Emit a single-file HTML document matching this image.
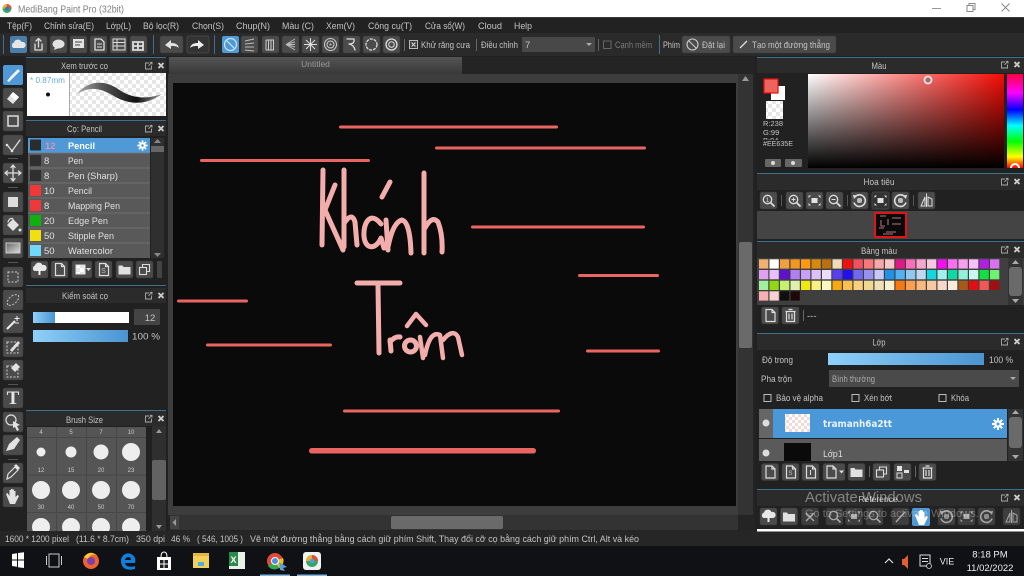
<!DOCTYPE html>
<html lang="vi"><head><meta charset="utf-8"><title>MediBang Paint Pro</title>
<style>
html,body{margin:0;padding:0;background:#222;overflow:hidden}
svg{display:block}
#root{filter:blur(.3px)}
text{font-family:"Liberation Sans",Arial,sans-serif;font-size:9.5px;fill:#c4c4c4}
.b{fill:#4b4b4b;stroke:#3a3a3a;stroke-width:.5}
.i{fill:none;stroke:#ddd;stroke-width:1.3;stroke-linecap:round;stroke-linejoin:round}
.f{fill:#e2e2e2}
.h{fill:#2b2b2b}
.c{text-anchor:middle}
.l{fill:#3f6f8f}
.r{fill:#ea6561}
.p{fill:none;stroke:#f3aeac;stroke-linecap:round;stroke-linejoin:round;stroke-width:5}
.n{font-size:6px;text-anchor:middle;fill:#ccc}
.d{fill:#eee}
.s rect{width:9.3px;height:9.3px}
</style></head><body>
<svg id="root" width="1024" height="576" viewBox="0 0 1024 576" xmlns="http://www.w3.org/2000/svg">
<defs>
<pattern id="ck" width="8" height="8" patternUnits="userSpaceOnUse"><rect width="8" height="8" fill="#fff"/><rect width="4" height="4" fill="#e6e6e6"/><rect x="4" y="4" width="4" height="4" fill="#e6e6e6"/></pattern>
<pattern id="ck2" width="6" height="6" patternUnits="userSpaceOnUse"><rect width="6" height="6" fill="#fff"/><rect width="3" height="3" fill="#f3d9d8"/><rect x="3" y="3" width="3" height="3" fill="#f3d9d8"/></pattern>
<linearGradient id="sat"><stop offset="0" stop-color="#fff"/><stop offset="1" stop-color="#f40c04"/></linearGradient>
<linearGradient id="blk" x2="0" y2="1"><stop offset="0" stop-color="#000" stop-opacity="0"/><stop offset="1" stop-color="#000"/></linearGradient>
<linearGradient id="hue" x2="0" y2="1"><stop offset="0" stop-color="#ff0040"/><stop offset=".2" stop-color="#f0f"/><stop offset=".38" stop-color="#00f"/><stop offset=".55" stop-color="#0ff"/><stop offset=".72" stop-color="#0f0"/><stop offset=".88" stop-color="#ff0"/><stop offset="1" stop-color="#f00"/></linearGradient>
<linearGradient id="bar"><stop offset="0" stop-color="#8fd0fb"/><stop offset="1" stop-color="#4a94d0"/></linearGradient>
<linearGradient id="tab" x2="0" y2="1"><stop offset="0" stop-color="#555"/><stop offset="1" stop-color="#383838"/></linearGradient>
<linearGradient id="grad" x1="0" y1="0" x2="1" y2="1"><stop offset="0" stop-color="#666"/><stop offset="1" stop-color="#ddd"/></linearGradient>
<linearGradient id="stk"><stop offset="0" stop-color="#aaa"/><stop offset=".3" stop-color="#555"/><stop offset=".7" stop-color="#111"/><stop offset="1" stop-color="#999"/></linearGradient>
<g id="pc"><path d="M4 1H0.5V7H6.5V3.5M3.5 3.8L7 .3M4.8 .3H7V2.5" fill="none" stroke="#aaa" stroke-width=".9"/><path d="M13.5 1L18.5 6M18.5 1L13.5 6" fill="none" stroke="#ccc" stroke-width="1.9"/></g>
<g id="gear"><circle r="3.7" fill="#fff"/><path d="M0-6V6M-6 0H6M-4.2-4.2L4.2 4.2M-4.2 4.2L4.2-4.2" stroke="#fff" stroke-width="2"/><circle r="1.5" fill="#4a98d8"/></g>
<path id="page" d="M-4-6H2L5-3V6H-4ZM2-6V-3H5" fill="none" stroke="#ddd" stroke-width="1.2"/>
<path id="folder" d="M-6-4H-2L-1-2.5H6V5H-6Z" fill="#e0e0e0"/>
<path id="trash" d="M-5-4H5M-2-6H2M-4-4V6H4V-4M-1.5-2V4M1.5-2V4" fill="none" stroke="#ddd" stroke-width="1.2"/>
<path id="cloud" d="M-5 3A3 3 0 0 1-4.5-2.5A4 4 0 0 1 3-3A3 3 0 0 1 5 3Z" fill="#e6e6e6"/>
<g id="dup"><rect x="-5" y="-2" width="7" height="7" fill="none" stroke="#ddd" stroke-width="1.1"/><path d="M-2-2V-5H5V2H2" fill="none" stroke="#ddd" stroke-width="1.1"/></g>
<g id="zoomi"><circle cx="-1" cy="-1" r="4.200" fill="none" stroke="#ddd" stroke-width="1.300"/><path d="M2 2L6 6" stroke="#ddd" stroke-width="1.800"/></g>
<g id="rot"><path d="M-4.500-3.500A5.800 5.800 0 1 1-5.500 2" fill="none" stroke="#ddd" stroke-width="1.600"/><path d="M-6.500-5.500L-2.500-5L-5.500-1.500Z" class="f"/><rect x="-2.500" y="-2.500" width="5" height="5" rx="2" class="f" opacity=".75"/></g>
<g id="fit"><rect x="-3" y="-2.500" width="6" height="5" class="f"/><path d="M-6-5H-3.500L-6-2.500ZM6-5H3.500L6-2.500ZM-6 5H-3.500L-6 2.500ZM6 5H3.500L6 2.500Z" class="f"/></g>
<rect id="btn" x="0" y="0" width="17" height="17" rx="2" class="b"/>
</defs>

<!-- base -->
<rect width="1024" height="576" fill="#212121"/>
<!-- title bar -->
<rect width="1024" height="17" fill="#fff"/>
<rect y="17" width="1024" height="1" fill="#3a3a3a"/>
<circle cx="7" cy="8.500" r="4.500" fill="#3aa36a"/><path d="M7 4A4.500 4.500 0 0 1 11.500 8.500H7Z" fill="#e05040"/><path d="M2.500 8.500A4.500 4.500 0 0 1 7 4V8.500Z" fill="#e8b030"/><circle cx="7" cy="8.500" r="1.800" fill="#3070c0"/>
<text x="18" y="12.500" textLength="106" lengthAdjust="spacingAndGlyphs" style="font-size:10.500px;fill:#808080">MediBang Paint Pro (32bit)</text>
<path d="M932 8.500H941" stroke="#999"/>
<path d="M967 5.500H973V11.500H967ZM969 5.500V3.500H975V9.500H973" fill="none" stroke="#888"/>
<path d="M1001.500 3.500L1009.500 11.500M1009.500 3.500L1001.500 11.500" stroke="#888"/>

<!-- menu -->
<rect y="18" width="1024" height="15" fill="#222"/>
<g>
<text x="7" y="29" textLength="25" lengthAdjust="spacingAndGlyphs">Tệp(F)</text>
<text x="44" y="29" textLength="50" lengthAdjust="spacingAndGlyphs">Chỉnh sửa(E)</text>
<text x="106" y="29" textLength="25" lengthAdjust="spacingAndGlyphs">Lớp(L)</text>
<text x="143" y="29" textLength="36" lengthAdjust="spacingAndGlyphs">Bộ lọc(R)</text>
<text x="192" y="29" textLength="32" lengthAdjust="spacingAndGlyphs">Chọn(S)</text>
<text x="236" y="29" textLength="34" lengthAdjust="spacingAndGlyphs">Chụp(N)</text>
<text x="282" y="29" textLength="32" lengthAdjust="spacingAndGlyphs">Màu (C)</text>
<text x="326" y="29" textLength="29" lengthAdjust="spacingAndGlyphs">Xem(V)</text>
<text x="368" y="29" textLength="44" lengthAdjust="spacingAndGlyphs">Công cụ(T)</text>
<text x="425" y="29" textLength="40" lengthAdjust="spacingAndGlyphs">Cửa sổ(W)</text>
<text x="478" y="29" textLength="24" lengthAdjust="spacingAndGlyphs">Cloud</text>
<text x="514" y="29" textLength="18" lengthAdjust="spacingAndGlyphs">Help</text>
</g>

<!-- toolbar -->
<rect y="33" width="1024" height="23" fill="#2a2a2a"/>
<rect x="3" y="35" width="1" height="19" class="l"/><rect x="153" y="35" width="1" height="19" class="l"/><rect x="214" y="35" width="1" height="19" class="l"/>
<rect x="10" y="36" width="17" height="17" rx="2" fill="#4a7ea8"/><use href="#cloud" transform="translate(18.500 45)"/>
<use href="#btn" transform="translate(30 36)"/><path d="M35 44V50H42V44M38.500 47V39M36 41L38.500 38.500L41 41" class="i"/>
<use href="#btn" transform="translate(50 36)"/><ellipse cx="58.500" cy="44" rx="6" ry="4.500" class="f"/><path d="M55 47L54 50L59 48Z" class="f"/>
<use href="#btn" transform="translate(70 36)"/><rect x="73" y="39" width="11" height="9" class="f"/><path d="M75 42H82M75 45H80" stroke="#444"/>
<use href="#btn" transform="translate(90 36)"/><path d="M95 39H101L104 42V50H95Z" class="i"/><path d="M97 44H102M97 47H102" stroke="#ddd"/>
<use href="#btn" transform="translate(110 36)"/><rect x="113" y="39" width="12" height="11" fill="none" stroke="#ddd"/><path d="M113 42.500H125M113 46H125M117 39V50" stroke="#ddd"/>
<use href="#btn" transform="translate(130 36)"/><path d="M133 42H143V50H133ZM138 42V50M133 46H143" fill="none" stroke="#ddd" stroke-width="1.800"/>
<rect x="160" y="36" width="23" height="17" rx="2" class="b"/><path d="M165 45L171 40V43C175 43 178 44 179 48C177 46 174 46 171 46V49Z" class="f"/>
<rect x="187" y="36" width="22" height="17" rx="2" fill="#333" stroke="#444"/><path d="M204 45L198 40V43C194 43 191 44 190 48C192 46 195 46 198 46V49Z" fill="#eee"/>
<rect x="222" y="36" width="17" height="17" rx="2" fill="#4f9ad6"/><circle cx="230.500" cy="44.500" r="6" fill="none" stroke="#cfe6fa" stroke-width="1.200"/><path d="M226.500 40.500L234.500 48.500" stroke="#cfe6fa" stroke-width="1.200"/>
<use href="#btn" transform="translate(241 36)"/><path d="M245 41L254 39M245 44L254 43M245 47L254 47M245 50L254 51" stroke="#bbb"/>
<use href="#btn" transform="translate(262 36)"/><path d="M266 40V50M268.500 40V50M271 40V50M273.500 40V50M266 40H274M266 50H274" stroke="#ccc"/>
<use href="#btn" transform="translate(282 36)"/><path d="M286 44.500L295 39M286 44.500L295 42M286 44.500H295M286 44.500L295 47M286 44.500L295 50" stroke="#bbb"/>
<use href="#btn" transform="translate(302 36)"/><path d="M310.500 38V51M304 44.500H317M306 40L315 49M315 40L306 49" stroke="#ddd"/>
<use href="#btn" transform="translate(322 36)"/><circle cx="330.500" cy="44.500" r="6" fill="none" stroke="#ccc"/><circle cx="330.500" cy="44.500" r="3.500" fill="none" stroke="#ccc"/><circle cx="330.500" cy="44.500" r="1" fill="#ccc"/>
<use href="#btn" transform="translate(343 36)"/><path d="M347 39H354Q355 44 349 44Q354 45 355 50" class="i"/>
<use href="#btn" transform="translate(363 36)"/><circle cx="371.500" cy="44.500" r="5.500" fill="none" stroke="#ddd" stroke-width="1.300" stroke-dasharray="3 1"/>
<use href="#btn" transform="translate(383 36)"/><circle cx="391.500" cy="44.500" r="5.500" fill="none" stroke="#ddd" stroke-width="1.300"/><circle cx="391.500" cy="44.500" r="2.800" fill="none" stroke="#ddd"/>
<rect x="404" y="39" width="1" height="12" fill="#666"/>
<rect x="409.500" y="40.500" width="8" height="8" fill="#3a3a3a" stroke="#bbb"/><path d="M411.500 42.500L415.500 46.500M415.500 42.500L411.500 46.500" stroke="#ddd"/>
<text x="421" y="48" textLength="49" lengthAdjust="spacingAndGlyphs">Khử răng cưa</text>
<rect x="476" y="39" width="1" height="12" fill="#666"/>
<text x="481" y="48" textLength="37" lengthAdjust="spacingAndGlyphs">Điều chỉnh</text>
<rect x="522" y="37" width="73" height="15" fill="#484848"/><text x="525" y="48">7</text><path d="M586 43H592L589 46Z" fill="#aaa"/>
<rect x="598" y="39" width="1" height="12" fill="#666"/>
<rect x="603.500" y="41" width="7.500" height="7.500" fill="none" stroke="#666"/>
<text x="615" y="48" textLength="37" lengthAdjust="spacingAndGlyphs" style="fill:#7a7a7a">Cạnh mềm</text>
<rect x="659" y="35" width="1" height="19" class="l"/>
<text x="663" y="48" textLength="17" lengthAdjust="spacingAndGlyphs">Phím</text>
<rect x="682" y="36" width="48" height="17" rx="2" class="b"/><circle cx="692.500" cy="44.500" r="5.500" fill="none" stroke="#ccc" stroke-width="1.100"/><path d="M688.500 40.500L696.500 48.500" stroke="#ccc"/>
<text x="702" y="48" textLength="23" lengthAdjust="spacingAndGlyphs">Đặt lại</text>
<rect x="733" y="36" width="103" height="17" rx="2" class="b"/><path d="M740 48L747 41" stroke="#ddd" stroke-width="1.300"/>
<text x="752" y="48" textLength="78" lengthAdjust="spacingAndGlyphs">Tạo một đường thẳng</text>

<!-- left tools -->
<rect x="3" y="65" width="20" height="20" rx="2" fill="#4f9ad6"/><path d="M7 81L11 76L18 69L20 71L13 78L9 82Z" fill="#f3f3f3"/>
<rect x="3" y="88" width="20" height="20" rx="2" class="b"/><path d="M13 92L19 97L13 104L7 99Z" class="f"/><path d="M13 92L19 97L16 100.500L10 95.500Z" fill="#fff"/>
<rect x="3" y="111" width="20" height="20" rx="2" class="b"/><rect x="8" y="116" width="10" height="10" fill="none" stroke="#ddd" stroke-width="1.500"/>
<rect x="3" y="135" width="20" height="20" rx="2" class="b"/><path d="M8 146L12 151L20 140" class="i" stroke-width="1.800"/><circle cx="7" cy="145" r="1.300" class="f"/><circle cx="12" cy="151" r="1.300" class="f"/>
<rect x="8" y="158" width="10" height="1" fill="#555"/>
<rect x="3" y="163" width="20" height="20" rx="2" class="b"/><path d="M13 165V181M5 173H21M11 167.500L13 165L15 167.500M11 178.500L13 181L15 178.500M7.500 171L5 173L7.500 175M18.500 171L21 173L18.500 175" class="i"/>
<rect x="8" y="187" width="10" height="1" fill="#555"/>
<rect x="3" y="192" width="20" height="20" rx="2" class="b"/><rect x="8" y="197" width="10" height="10" fill="#ddd"/>
<rect x="3" y="215" width="20" height="20" rx="2" class="b"/><path d="M7 225L13 219L19 225L13 231Z" class="f"/><path d="M8 222Q10 217 13 219" class="i"/><circle cx="20" cy="230" r="1.500" class="f"/>
<rect x="3" y="238" width="20" height="20" rx="2" class="b"/><rect x="6" y="243" width="14" height="10" fill="url(#grad)" stroke="#ccc"/>
<rect x="8" y="262" width="10" height="1" fill="#555"/>
<rect x="3" y="267" width="20" height="20" rx="2" class="b"/><rect x="8" y="272" width="10" height="10" fill="none" stroke="#ccc" stroke-dasharray="2 1.500"/>
<rect x="3" y="290" width="20" height="20" rx="2" class="b"/><path d="M8 305C5 301 12 293 18 295C21 298 14 307 8 305Z" fill="none" stroke="#ccc" stroke-dasharray="2 1.500"/>
<rect x="3" y="313" width="20" height="20" rx="2" class="b"/><path d="M7 329L15 321" stroke="#eee" stroke-width="2"/><path d="M17 316V321M14.500 318.500H19.500M15 323H19" stroke="#eee"/>
<rect x="3" y="337" width="20" height="20" rx="2" class="b"/><rect x="7" y="342" width="11" height="11" fill="none" stroke="#ccc" stroke-dasharray="2 1.500"/><path d="M10 350L18 341L20 343L12 352Z" class="f"/>
<rect x="3" y="360" width="20" height="20" rx="2" class="b"/><rect x="7" y="366" width="11" height="11" fill="none" stroke="#ccc" stroke-dasharray="2 1.500"/><path d="M11 368L16 363L20 367L15 372Z" class="f"/>
<rect x="8" y="384" width="10" height="1" fill="#555"/>
<rect x="3" y="388" width="20" height="20" rx="2" class="b"/><text x="13" y="404" class="c" style="font-family:'Liberation Serif',serif;font-size:19px;font-weight:bold;fill:#e6e6e6">T</text>
<rect x="3" y="412" width="20" height="20" rx="2" class="b"/><circle cx="11" cy="420" r="5" fill="none" stroke="#ddd" stroke-width="1.200"/><path d="M13 421L20 425L17 426L19 430L17 431L15 427L13 428Z" class="f"/>
<rect x="3" y="435" width="20" height="20" rx="2" class="b"/><path d="M6 451L9 444L17 437L20 440L14 449Z" class="f"/>
<rect x="8" y="459" width="10" height="1" fill="#555"/>
<rect x="3" y="463" width="20" height="20" rx="2" class="b"/><path d="M7 479L8 474L15 467L18 470L11 477Z" fill="none" stroke="#ddd" stroke-width="1.200"/><path d="M14 466L16 464L20 468L18 470Z" class="f"/>
<rect x="3" y="487" width="20" height="20" rx="2" class="b"/><path d="M8 499L6 494L7.500 493L9.500 496V490H11V495V489H12.500V495V489.500H14V495V491H15.500V497L17.500 495L19 496L15 504H10Z" class="f"/>

<!-- brush preview panel -->
<rect x="26" y="57" width="140" height="1" class="l"/>
<rect x="26" y="58" width="140" height="15" class="h"/>
<text x="84.500" y="69" class="c" textLength="47" lengthAdjust="spacingAndGlyphs">Xem trước cọ</text>
<use href="#pc" x="145" y="62"/>
<rect x="27" y="73" width="139" height="43" fill="#fff"/>
<rect x="70" y="73" width="96" height="43" fill="url(#ck)"/>
<rect x="69" y="73" width="1" height="43" fill="#aaa"/>
<text x="30" y="83" textLength="35" lengthAdjust="spacingAndGlyphs" style="font-size:8.500px;fill:#6ba7d8">* 0.87mm</text>
<circle cx="48" cy="94.500" r="2" fill="#111"/>
<path d="M77 94C88 80 105 80 118 89C128 96 142 101 162 94C145 106 128 105 112 95C100 88 90 86 77 94Z" fill="url(#stk)"/>

<!-- brush panel -->
<rect x="26" y="120" width="140" height="1" class="l"/>
<rect x="26" y="121" width="140" height="15" class="h"/>
<text x="84.500" y="132" class="c" textLength="35" lengthAdjust="spacingAndGlyphs">Cọ: Pencil</text>
<use href="#pc" x="145" y="125"/>
<rect x="28" y="138" width="122" height="120" fill="#595959"/>
<rect x="28" y="138" width="122" height="15" fill="#4f9ad6"/>
<path d="M28 153H150M28 168H150M28 183H150M28 198H150M28 213H150M28 228H150M28 243H150" stroke="#777" stroke-width=".7"/>
<rect x="30" y="139.500" width="11" height="11" fill="#2c2c2c"/>
<rect x="30" y="155" width="11" height="11" fill="#2f2f2f"/>
<rect x="30" y="170" width="11" height="11" fill="#2f2f2f"/>
<rect x="30" y="185" width="11" height="11" fill="#f03838"/>
<rect x="30" y="200" width="11" height="11" fill="#f03838"/>
<rect x="30" y="215" width="11" height="11" fill="#10b010"/>
<rect x="30" y="230" width="11" height="11" fill="#f0e010"/>
<rect x="30" y="245" width="11" height="11" fill="#70d8f8"/>
<text x="45" y="149" style="fill:#e090b0;font-weight:bold">12</text><text x="68" y="149" textLength="27" lengthAdjust="spacingAndGlyphs" style="fill:#fff;font-weight:bold">Pencil</text>
<use href="#gear" transform="translate(142.500 145.500) scale(.85)"/>
<text x="44" y="164" style="fill:#e0e0e0">8</text><text x="68" y="164" textLength="15" lengthAdjust="spacingAndGlyphs" style="fill:#e0e0e0">Pen</text>
<text x="44" y="179" style="fill:#e0e0e0">8</text><text x="68" y="179" textLength="50" lengthAdjust="spacingAndGlyphs" style="fill:#e0e0e0">Pen (Sharp)</text>
<text x="44" y="194" style="fill:#e0e0e0">10</text><text x="68" y="194" textLength="24" lengthAdjust="spacingAndGlyphs" style="fill:#e0e0e0">Pencil</text>
<text x="44" y="209" style="fill:#e0e0e0">8</text><text x="68" y="209" textLength="52" lengthAdjust="spacingAndGlyphs" style="fill:#e0e0e0">Mapping Pen</text>
<text x="44" y="224" style="fill:#e0e0e0">20</text><text x="68" y="224" textLength="40" lengthAdjust="spacingAndGlyphs" style="fill:#e0e0e0">Edge Pen</text>
<text x="44" y="239" style="fill:#e0e0e0">50</text><text x="68" y="239" textLength="46" lengthAdjust="spacingAndGlyphs" style="fill:#e0e0e0">Stipple Pen</text>
<text x="44" y="254" style="fill:#e0e0e0">50</text><text x="68" y="254" textLength="45" lengthAdjust="spacingAndGlyphs" style="fill:#e0e0e0">Watercolor</text>
<rect x="151" y="138" width="13" height="120" fill="#2f2f2f"/>
<rect x="151" y="146" width="13" height="6" fill="#666"/>
<path d="M154 143L157.500 139L161 143Z" fill="#888"/><path d="M154 253L157.500 257L161 253Z" fill="#888"/>
<use href="#btn" transform="translate(31 261)"/><use href="#cloud" transform="translate(39.500 268)"/><path d="M39.500 268V275" stroke="#eee" stroke-width="2"/>
<use href="#btn" transform="translate(51 261)"/><use href="#page" transform="translate(59.500 269.500)"/>
<rect x="72" y="261" width="20" height="17" rx="2" class="b"/><rect x="76" y="265" width="9" height="9" fill="url(#ck)" stroke="#ddd"/><path d="M86 268H91L88.500 271Z" fill="#ddd"/>
<use href="#btn" transform="translate(95 261)"/><use href="#page" transform="translate(103.500 269.500)"/><text x="103.500" y="273" class="c" style="font-size:7px">S</text>
<use href="#btn" transform="translate(116 261)"/><use href="#folder" transform="translate(124.500 269.500)"/>
<use href="#btn" transform="translate(136 261)"/><use href="#dup" transform="translate(144.500 269.500)"/>
<rect x="157" y="261" width="5" height="17" rx="1" fill="#444"/>

<!-- brush control -->
<rect x="26" y="285" width="140" height="1" class="l"/>
<rect x="26" y="288" width="140" height="15" class="h"/>
<text x="85" y="299" class="c" textLength="46" lengthAdjust="spacingAndGlyphs">Kiểm soát cọ</text>
<use href="#pc" x="145" y="292"/>
<rect x="33" y="312" width="96" height="11" fill="#fff"/>
<rect x="33" y="312" width="22" height="11" fill="url(#bar)"/>
<rect x="134" y="309" width="26" height="16" rx="1" fill="#444"/>
<text x="150" y="321" class="c">12</text>
<rect x="33" y="330" width="95" height="12" fill="url(#bar)"/>
<text x="132" y="339.500" textLength="28" lengthAdjust="spacingAndGlyphs">100 %</text>

<!-- brush size -->
<rect x="26" y="410" width="140" height="1" class="l"/>
<rect x="26" y="411" width="140" height="15" class="h"/>
<text x="84.500" y="423" class="c" textLength="37" lengthAdjust="spacingAndGlyphs">Brush Size</text>
<use href="#pc" x="145" y="415"/>
<svg x="27" y="427" width="120" height="104" viewBox="27 427 120 104">
<rect x="27" y="427" width="119" height="104" fill="#555"/>
<path d="M56.500 427V531M86.500 427V531M116.500 427V531M27 437.500H146M27 475H146M27 512.500H146" stroke="#474747"/>
<text x="41" y="434" class="n">4</text><text x="71" y="434" class="n">5</text><text x="101" y="434" class="n">7</text><text x="131" y="434" class="n">10</text>
<circle cx="41" cy="452" r="4.500" class="d"/><circle cx="71" cy="452" r="5.500" class="d"/><circle cx="101" cy="452" r="7.500" class="d"/><circle cx="131" cy="452" r="9" class="d"/>
<text x="41" y="472" class="n">12</text><text x="71" y="472" class="n">15</text><text x="101" y="472" class="n">20</text><text x="131" y="472" class="n">23</text>
<circle cx="41" cy="490" r="9" class="d"/><circle cx="71" cy="490" r="9" class="d"/><circle cx="101" cy="490" r="9" class="d"/><circle cx="131" cy="490" r="9" class="d"/>
<text x="41" y="509" class="n">30</text><text x="71" y="509" class="n">40</text><text x="101" y="509" class="n">50</text><text x="131" y="509" class="n">70</text>
<circle cx="41" cy="527" r="9" class="d"/><circle cx="71" cy="527" r="9" class="d"/><circle cx="101" cy="527" r="9" class="d"/><circle cx="131" cy="527" r="9" class="d"/>
</svg>
<rect x="152" y="426" width="14" height="105" fill="#2f2f2f"/>
<rect x="152" y="460" width="14" height="40" rx="2" fill="#626262"/>
<path d="M156 433L159 429L162 433Z" fill="#999"/><path d="M156 525L159 529L162 525Z" fill="#999"/>

<!-- canvas area -->
<rect x="168" y="57" width="587" height="474" fill="#242424"/>
<rect x="169" y="57" width="293" height="17" fill="url(#tab)"/>
<text x="315.500" y="67" class="c" style="font-size:8.500px;fill:#999">Untitled</text>
<rect x="168" y="74" width="570" height="441" fill="#3d3d3d"/>
<rect x="173" y="83" width="563" height="423" fill="#0a0a0a"/>
<rect x="738" y="74" width="15" height="441" fill="#333"/>
<rect x="739" y="242" width="13" height="106" rx="2" fill="#6a6a6a"/>
<path d="M742 81L745.500 76L749 81Z" fill="#999"/>
<rect x="170" y="515" width="568" height="15" fill="#333"/>
<rect x="391" y="516" width="112" height="13" rx="2" fill="#6a6a6a"/>
<rect x="170" y="516" width="9" height="13" fill="#444"/><path d="M176 519L172.500 522.500L176 526Z" fill="#999"/>

<!-- drawing lines -->
<rect x="339" y="125.500" width="219" height="3" rx="1.500" class="r"/>
<rect x="435" y="146.500" width="211" height="3" rx="1.500" class="r"/>
<rect x="200" y="159" width="170" height="3" rx="1.500" class="r"/>
<rect x="471" y="225.500" width="174" height="3" rx="1.500" class="r"/>
<rect x="578" y="274" width="81" height="3" rx="1.500" class="r"/>
<rect x="177" y="299.500" width="71" height="3" rx="1.500" class="r"/>
<rect x="206" y="343.500" width="126" height="3" rx="1.500" class="r"/>
<rect x="586" y="349.500" width="74" height="3" rx="1.500" class="r"/>
<rect x="343" y="409.500" width="217" height="3" rx="1.500" class="r"/>
<rect x="309" y="448" width="227" height="5.500" rx="2.700" class="r"/>
<!-- Khánh -->
<path class="p" d="M323 170L322 245M335 185L325 210L343 250M344 170V247M345 222Q352 212 355 222L357 245M381 224C370 210 363 224 364 236C365 250 376 250 381 238L384 248M390 182L382 197M386 220L388 250M388 247Q393 222 402 220Q410 222 411 253M424 173V253M425 228Q432 215 438 222Q443 235 442 252"/>
<!-- Trâm -->
<path class="p" d="M357 283H400M378 285L379 353M391 351L390 340M390 342Q395 336 400 337"/>
<circle cx="410.500" cy="346" r="6" class="p"/>
<path class="p" d="M407 326L416 314L426 325M420 337L423 358M425 355Q430 330 440 335L443 358M443 340Q453 328 458 337L462 355" style="stroke-width:4.500"/>

<!-- color panel -->
<rect x="757" y="57" width="267" height="1" class="l"/>
<rect x="757" y="58" width="267" height="15" class="h"/>
<text x="879" y="69" class="c" textLength="15" lengthAdjust="spacingAndGlyphs">Màu</text>
<use href="#pc" x="1001" y="61"/>
<rect x="771" y="86" width="14" height="14" fill="#fff"/>
<rect x="764" y="79" width="14" height="14" fill="#ee635e" stroke="#e01010" stroke-width="1.200"/>
<rect x="766" y="101" width="17" height="18" fill="url(#ck)"/>
<text x="763" y="126" style="font-size:7.500px">R:238</text>
<text x="763" y="135" style="font-size:7.500px">G:99</text>
<svg x="763" y="136" width="30" height="4"><text x="0" y="7" style="font-size:7.500px">B:94</text></svg>
<text x="763" y="146" textLength="30" lengthAdjust="spacingAndGlyphs" style="font-size:7.500px">#EE635E</text>
<rect x="765" y="159" width="16" height="8" rx="1" fill="#666"/><rect x="785" y="159" width="17" height="8" rx="1" fill="#666"/>
<circle cx="773" cy="163" r="2" fill="#ddd"/><circle cx="793" cy="163" r="2" fill="#ddd"/>
<rect x="808" y="74" width="196" height="94" fill="url(#sat)"/>
<rect x="808" y="74" width="196" height="94" fill="url(#blk)"/>
<circle cx="928" cy="80" r="3.500" fill="#a86a6c" stroke="#f0e6e6" stroke-width="1.800"/>
<rect x="1007" y="74" width="16" height="94" fill="url(#hue)"/>
<svg x="1007" y="160" width="16" height="8"><circle cx="8" cy="8" r="4" fill="none" stroke="#fff" stroke-width="2"/></svg>

<!-- navigator -->
<rect x="757" y="173" width="267" height="1" class="l"/>
<rect x="757" y="174" width="267" height="16" class="h"/>
<text x="879" y="185" class="c" textLength="31" lengthAdjust="spacingAndGlyphs">Hoa tiêu</text>
<use href="#pc" x="1001" y="178"/>
<use href="#btn" transform="translate(760 192)"/><use href="#zoomi" transform="translate(768.500 200.500)"/><text x="767.500" y="202" class="c" style="font-size:6px;fill:#ddd">1</text><rect x="781" y="195" width="1" height="11" fill="#555"/>
<use href="#btn" transform="translate(786 192)"/><use href="#zoomi" transform="translate(794.500 200.500)"/><path d="M791.500 199.500H795.500M793.500 197.500V201.500" stroke="#ddd"/>
<use href="#btn" transform="translate(806 192)"/><use href="#fit" transform="translate(814.500 200.500)"/>
<use href="#btn" transform="translate(826 192)"/><use href="#zoomi" transform="translate(834.500 200.500)"/><path d="M831.500 199.500H835.500" stroke="#ddd"/><rect x="847" y="195" width="1" height="11" fill="#555"/>
<use href="#btn" transform="translate(851 192)"/><use href="#rot" transform="translate(859.500 200.500)"/>
<rect x="872" y="192" width="17" height="17" rx="2" fill="#333" stroke="#444"/><use href="#fit" transform="translate(880.500 200.500)"/>
<use href="#btn" transform="translate(892 192)"/><use href="#rot" transform="translate(900.500 200.500) scale(-1 1)"/><rect x="913" y="195" width="1" height="11" fill="#555"/>
<use href="#btn" transform="translate(918 192)"/><path d="M926.500 193.500V207M925 197L921 206H925ZM928 197V206H932V199Z" fill="none" stroke="#ddd"/>
<rect x="757" y="211" width="267" height="28" fill="#444"/>
<rect x="875" y="213" width="31" height="24" fill="#0a0a0a" stroke="#e01515" stroke-width="2"/>
<path d="M880 216H886M892 218H901M881 220L881 226H885M888 219V225M892 224H901M879 228H884M886 232H896M883 234H893" stroke="#e99" stroke-width=".8"/>

<!-- palette -->
<rect x="757" y="241" width="267" height="1" class="l"/>
<rect x="757" y="242" width="267" height="16" class="h"/>
<text x="879" y="254" class="c" textLength="36" lengthAdjust="spacingAndGlyphs">Bảng màu</text>
<use href="#pc" x="1001" y="246"/>
<rect x="757" y="258" width="267" height="47" fill="#3f3f3f"/>
<g class="s">
<rect x="759" y="259.300" fill="#f0b070"/><rect x="769.500" y="259.300" fill="#ffffff"/><rect x="780" y="259.300" fill="#f0a040"/><rect x="790.500" y="259.300" fill="#f09820"/><rect x="801" y="259.300" fill="#ff9a10"/><rect x="811.500" y="259.300" fill="#d88a10"/><rect x="822" y="259.300" fill="#b87010"/><rect x="832.500" y="259.300" fill="#f0dcb8"/><rect x="843" y="259.300" fill="#f01010"/><rect x="853.500" y="259.300" fill="#f05060"/><rect x="864" y="259.300" fill="#f87878"/><rect x="874.500" y="259.300" fill="#f8a8a8"/><rect x="885" y="259.300" fill="#f8c8c8"/><rect x="895.500" y="259.300" fill="#e01888"/><rect x="906" y="259.300" fill="#f870b8"/><rect x="916.500" y="259.300" fill="#f8a8d0"/><rect x="927" y="259.300" fill="#f8c8e0"/><rect x="937.500" y="259.300" fill="#f010f0"/><rect x="948" y="259.300" fill="#f870f0"/><rect x="958.500" y="259.300" fill="#f8a0f0"/><rect x="969" y="259.300" fill="#f8c0f8"/><rect x="979.500" y="259.300" fill="#b020e0"/><rect x="990" y="259.300" fill="#d870f0"/>
<rect x="759" y="270" fill="#e0a0f0"/><rect x="769.500" y="270" fill="#e8c0f8"/><rect x="780" y="270" fill="#6010d0"/><rect x="790.500" y="270" fill="#b080f0"/><rect x="801" y="270" fill="#c8a0f8"/><rect x="811.500" y="270" fill="#dcc0f8"/><rect x="822" y="270" fill="#ecdcf8"/><rect x="832.500" y="270" fill="#5840f0"/><rect x="843" y="270" fill="#2010f0"/><rect x="853.500" y="270" fill="#7068f0"/><rect x="864" y="270" fill="#9890f0"/><rect x="874.500" y="270" fill="#c8c8f8"/><rect x="885" y="270" fill="#2090e8"/><rect x="895.500" y="270" fill="#50b0f0"/><rect x="906" y="270" fill="#90c8f0"/><rect x="916.500" y="270" fill="#c0d8f0"/><rect x="927" y="270" fill="#10d8e0"/><rect x="937.500" y="270" fill="#a0f0f0"/><rect x="948" y="270" fill="#10d8a0"/><rect x="958.500" y="270" fill="#90f0d8"/><rect x="969" y="270" fill="#c8f8f0"/><rect x="979.500" y="270" fill="#10e040"/><rect x="990" y="270" fill="#70f070"/>
<rect x="759" y="280.700" fill="#a0f0a0"/><rect x="769.500" y="280.700" fill="#90d810"/><rect x="780" y="280.700" fill="#c8f070"/><rect x="790.500" y="280.700" fill="#e0f0b0"/><rect x="801" y="280.700" fill="#f0e810"/><rect x="811.500" y="280.700" fill="#f8f080"/><rect x="822" y="280.700" fill="#f8f8c0"/><rect x="832.500" y="280.700" fill="#f8a810"/><rect x="843" y="280.700" fill="#f8c050"/><rect x="853.500" y="280.700" fill="#f8d080"/><rect x="864" y="280.700" fill="#f0d890"/><rect x="874.500" y="280.700" fill="#f0e0b8"/><rect x="885" y="280.700" fill="#f8f0d0"/><rect x="895.500" y="280.700" fill="#f87810"/><rect x="906" y="280.700" fill="#f8a050"/><rect x="916.500" y="280.700" fill="#f8b880"/><rect x="927" y="280.700" fill="#f8c8a0"/><rect x="937.500" y="280.700" fill="#f8d8c8"/><rect x="948" y="280.700" fill="#f8ecdc"/><rect x="958.500" y="280.700" fill="#a85818"/><rect x="969" y="280.700" fill="#e01010"/><rect x="979.500" y="280.700" fill="#f05858"/><rect x="990" y="280.700" fill="#a01010"/>
<rect x="759" y="291.300" fill="#f8b0b0"/><rect x="769.500" y="291.300" fill="#f8d0d0"/><rect x="780" y="291.300" fill="#101010"/><rect x="790.500" y="291.300" fill="#200808"/>
</g>
<rect x="1008" y="258" width="15" height="47" fill="#333"/>
<rect x="1009" y="267" width="13" height="29" rx="3" fill="#6a6a6a"/>
<path d="M1012 264L1015.500 260L1019 264Z" fill="#aaa"/><path d="M1012 299L1015.500 303L1019 299Z" fill="#aaa"/>
<use href="#btn" transform="translate(761.500 307)"/><use href="#page" transform="translate(770 315.500)"/>
<use href="#btn" transform="translate(782 307)"/><use href="#trash" transform="translate(790.500 315.500)"/>
<rect x="803" y="310" width="1" height="11" fill="#666"/>
<text x="807" y="319">---</text>

<!-- layers -->
<rect x="757" y="333" width="267" height="1" class="l"/>
<rect x="757" y="334" width="267" height="16" class="h"/>
<text x="879" y="345.500" class="c" textLength="13" lengthAdjust="spacingAndGlyphs">Lớp</text>
<use href="#pc" x="1001" y="338"/>
<text x="762" y="363" textLength="31" lengthAdjust="spacingAndGlyphs">Độ trong</text>
<rect x="828" y="353" width="156" height="12" fill="url(#bar)"/>
<text x="989" y="363" textLength="24" lengthAdjust="spacingAndGlyphs">100 %</text>
<text x="761" y="382" textLength="31" lengthAdjust="spacingAndGlyphs">Pha trộn</text>
<rect x="829" y="370" width="190" height="17" fill="#4a4a4a"/>
<text x="832" y="382" textLength="43" lengthAdjust="spacingAndGlyphs" style="fill:#aaa">Bình thường</text><path d="M1010 377H1016L1013 380Z" fill="#aaa"/>
<rect x="764" y="394.500" width="7" height="7" fill="none" stroke="#bbb"/><text x="776" y="401" textLength="47" lengthAdjust="spacingAndGlyphs">Bảo vệ alpha</text>
<rect x="852" y="394.500" width="7" height="7" fill="none" stroke="#bbb"/><text x="864" y="401" textLength="28" lengthAdjust="spacingAndGlyphs">Xén bớt</text>
<rect x="939" y="394.500" width="7" height="7" fill="none" stroke="#bbb"/><text x="951" y="401" textLength="18" lengthAdjust="spacingAndGlyphs">Khóa</text>
<rect x="759" y="409" width="14" height="29" fill="#666"/>
<rect x="773" y="409" width="234" height="29" fill="#4a98d8"/>
<rect x="785" y="414" width="25" height="18" fill="url(#ck2)"/>
<text x="823" y="427" textLength="69" lengthAdjust="spacingAndGlyphs" style="font-family:'DejaVu Sans',sans-serif;font-weight:bold;fill:#e8f2fb">tramanh6a2tt</text>
<use href="#gear" transform="translate(998 424)"/>
<circle cx="766" cy="423" r="3.500" fill="#ddd"/>
<rect x="759" y="439" width="248" height="22" fill="#5a5a5a"/>
<rect x="784" y="443" width="27" height="18" fill="#0a0a0a"/>
<text x="823" y="457" textLength="20" lengthAdjust="spacingAndGlyphs" style="font-family:'DejaVu Sans',sans-serif;font-size:9px;fill:#ddd">Lớp1</text>
<circle cx="766" cy="453" r="3.500" fill="#ddd"/>
<rect x="1008" y="409" width="15" height="52" fill="#333"/>
<rect x="1009" y="417" width="13" height="31" rx="3" fill="#6a6a6a"/>
<path d="M1012 414L1015.500 410L1019 414Z" fill="#aaa"/><path d="M1012 455L1015.500 459L1019 455Z" fill="#aaa"/>
<use href="#btn" transform="translate(761.500 463.500)"/><use href="#page" transform="translate(770 472)"/>
<use href="#btn" transform="translate(782 463.500)"/><use href="#page" transform="translate(790.500 472)"/><text x="790.500" y="475" class="c" style="font-size:6px">S</text>
<use href="#btn" transform="translate(802 463.500)"/><use href="#page" transform="translate(810.500 472)"/><path d="M810.500 475V470" stroke="#ddd"/>
<rect x="823" y="463.500" width="22" height="17" rx="2" class="b"/><use href="#page" transform="translate(831 472)"/><path d="M839 470.500H844L841.500 473.500Z" fill="#ddd"/>
<use href="#btn" transform="translate(848 463.500)"/><use href="#folder" transform="translate(856.500 472)"/>
<rect x="869" y="466" width="1" height="11" fill="#666"/>
<use href="#btn" transform="translate(873 463.500)"/><use href="#dup" transform="translate(881.500 472)"/>
<use href="#btn" transform="translate(894 463.500)"/><rect x="897" y="466" width="5" height="5" class="f"/><rect x="897" y="473" width="5" height="5" fill="none" stroke="#ddd"/><rect x="904" y="470" width="5" height="3" class="f"/>
<rect x="915" y="466" width="1" height="11" fill="#666"/>
<use href="#btn" transform="translate(919 463.500)"/><use href="#trash" transform="translate(927.500 472)"/>

<!-- reference -->
<rect x="757" y="489" width="267" height="1" class="l"/>
<rect x="757" y="490" width="267" height="16" class="h"/>
<text x="878" y="502" class="c" style="font-size:8.500px">Reference</text>
<use href="#pc" x="1001" y="494"/>
<use href="#btn" transform="translate(760 508)"/><use href="#cloud" transform="translate(768.500 515)"/><path d="M768.500 515V522" stroke="#eee" stroke-width="2"/>
<use href="#btn" transform="translate(780.500 508)"/><use href="#folder" transform="translate(789 516.500)"/>
<g opacity=".7">
<use href="#btn" transform="translate(801.500 508)"/><path d="M806 513L814 521M814 513L806 521" stroke="#ddd" stroke-width="1.500"/>
<use href="#btn" transform="translate(826 508)"/><use href="#zoomi" transform="translate(834.500 516.500)"/>
<use href="#btn" transform="translate(845.500 508)"/><use href="#fit" transform="translate(854 516.500)"/>
<use href="#btn" transform="translate(866 508)"/><use href="#zoomi" transform="translate(874.500 516.500)"/>
<use href="#btn" transform="translate(892 508)"/><path d="M896 522L905 512" stroke="#ddd" stroke-width="1.500"/>
<use href="#btn" transform="translate(938 508)"/><use href="#rot" transform="translate(946.500 516.500)"/>
<use href="#btn" transform="translate(958 508)"/><use href="#fit" transform="translate(966.500 516.500)"/>
<use href="#btn" transform="translate(978 508)"/><use href="#rot" transform="translate(986.500 516.500) scale(-1 1)"/>
<use href="#btn" transform="translate(1003 508)"/><path d="M1011.500 510V523M1010 513L1006 522H1010ZM1013 513V522H1017V515Z" fill="none" stroke="#ddd"/>
</g>
<rect x="912" y="508" width="18" height="18" rx="2" fill="#4f9ad6"/>
<path d="M917 520L915 515L916.500 514L918.500 517V511H920V516V510H921.500V516V510.500H923V516V512H924.500V518L926.500 516L928 517L924 525H919Z" fill="#fff"/>
<text x="805" y="502" textLength="117" lengthAdjust="spacingAndGlyphs" style="font-size:14.500px;fill:#fff;fill-opacity:.42">Activate Windows</text>
<text x="805" y="517" style="font-size:11px;fill:#fff;fill-opacity:.3">Go to Settings to activate Windows.</text>

<!-- status -->
<rect y="531" width="1024" height="15" fill="#262626"/>
<rect x="757" y="529" width="267" height="2.500" fill="#fff"/>
<text x="5" y="542" textLength="64" lengthAdjust="spacingAndGlyphs">1600 * 1200 pixel</text>
<text x="76" y="542" textLength="53" lengthAdjust="spacingAndGlyphs">(11.6 * 8.7cm)</text>
<text x="136" y="542" textLength="29" lengthAdjust="spacingAndGlyphs">350 dpi</text>
<text x="171" y="542" textLength="19" lengthAdjust="spacingAndGlyphs">46 %</text>
<text x="197" y="542" textLength="46" lengthAdjust="spacingAndGlyphs">( 546, 1005 )</text>
<text x="250" y="542" textLength="389" lengthAdjust="spacingAndGlyphs">Vẽ một đường thẳng bằng cách giữ phím Shift, Thay đổi cỡ cọ bằng cách giữ phím Ctrl, Alt và kéo</text>

<!-- taskbar -->
<rect y="546" width="1024" height="30" fill="#0f1114"/>
<path d="M12 554L17 553.200V559.500H12ZM18 553V559.500H24V552.200ZM12 560.500H17V566.800L12 566ZM18 560.500H24V568L18 567.200Z" fill="#fff"/>
<path d="M49 554H59V567H49ZM46.500 556V565M61.500 556V565" fill="none" stroke="#ccc"/>
<circle cx="91" cy="561" r="8" fill="#f0632a"/><path d="M84 557Q90 549 98 556Q92 552 88 559Z" fill="#ffcb2e"/><circle cx="91" cy="561" r="4" fill="#7a3fb0"/>
<path d="M121 561C121 555 127 552 131 554C135 556 136 559 135 563H125C125 566 130 568 135 566V569C128 571 121 569 121 561ZM125 560H131C131 556 126 556 125 560Z" fill="#1080e0"/>
<path d="M157 557H171V570H157Z" fill="#fff"/><path d="M161 557Q161 552 164 552Q167 552 167 557" fill="none" stroke="#fff"/><rect x="160" y="560" width="3.500" height="3.500" fill="#222"/><rect x="164.500" y="560" width="3.500" height="3.500" fill="#222"/><rect x="160" y="564.500" width="3.500" height="3.500" fill="#222"/><rect x="164.500" y="564.500" width="3.500" height="3.500" fill="#222"/>
<rect x="193" y="553" width="16" height="15" fill="#f3d05c"/><rect x="193" y="553" width="16" height="3" fill="#e4b63c"/><rect x="198" y="562" width="6" height="4" fill="#49b0e0"/>
<rect x="229" y="552" width="16" height="17" fill="#e8f0e8"/><rect x="229" y="552" width="9" height="14" fill="#2b8a4a"/><text x="233.500" y="563" class="c" style="font-size:9px;font-weight:bold;fill:#fff">X</text>
<circle cx="275" cy="561" r="8" fill="#e04a3a"/><path d="M275 561L268 566A8 8 0 0 0 279 568Z" fill="#36a852"/><path d="M275 561L283 558A8 8 0 0 1 279 568Z" fill="#f4c020"/><circle cx="275" cy="561" r="3.500" fill="#4a90e0" stroke="#fff"/><path d="M279 562L287 567L283 568L285 571L280 570Z" fill="#5aa0d0"/>
<rect x="303" y="552" width="18" height="18" rx="3" fill="#f2f2f2"/><circle cx="312" cy="561" r="6" fill="#3aa36a"/><path d="M312 555A6 6 0 0 1 318 561H312Z" fill="#e05040"/><path d="M306 561A6 6 0 0 1 312 555V561Z" fill="#e8b030"/><circle cx="312" cy="561" r="2.300" fill="#3fa8d8"/>
<rect x="260" y="574.500" width="30" height="1.500" fill="#7db8e8"/><rect x="297" y="574.500" width="30" height="1.500" fill="#7db8e8"/>
<path d="M885 563L889 559L893 563" fill="none" stroke="#ddd" stroke-width="1.200"/>
<path d="M902 559H904L908 555V569L904 565H902Z" fill="#e06030"/>
<path d="M920 555H930V566H920ZM922 558.500H928M922 561.500H928" fill="none" stroke="#ddd"/><circle cx="929" cy="566" r="2.500" fill="#111" stroke="#ddd" stroke-width=".8"/>
<text x="947" y="564.500" class="c" style="font-size:9px;fill:#eee">VIE</text>
<text x="990" y="557.500" class="c" style="fill:#eee">8:18 PM</text>
<text x="990" y="571" class="c" style="fill:#eee">11/02/2022</text>
</svg>
</body></html>
